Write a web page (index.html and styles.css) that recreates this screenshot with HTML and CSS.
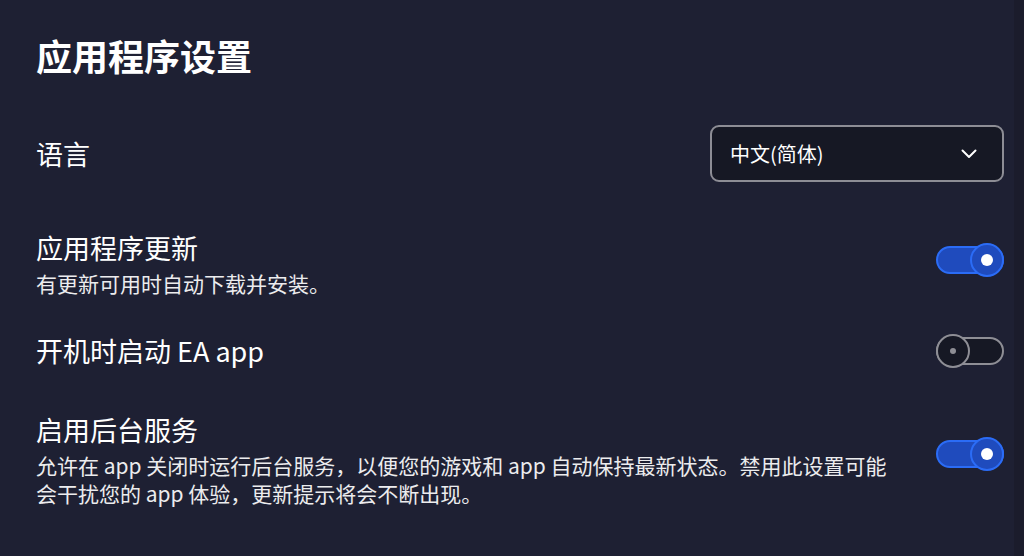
FILE: index.html
```html
<!DOCTYPE html>
<html lang="zh-CN">
<head>
    <meta charset="UTF-8">
    <meta name="viewport" content="width=device-width, initial-scale=1.0">
    <title>应用程序设置</title>
    <link rel="stylesheet" href="styles.css">
</head>
<body>
    <main class="settings">
        <h1 class="title">应用程序设置</h1>

        <div class="row row-lang">
            <div class="label">语言</div>
            <div class="select">
                <span>中文(简体)</span>
                <svg class="chevron" width="16" height="10" viewBox="0 0 16 10">
                    <path d="M1.5 1.5 L8 8 L14.5 1.5" fill="none" stroke="#fff" stroke-width="2" stroke-linecap="round" stroke-linejoin="round"/>
                </svg>
            </div>
        </div>

        <div class="row row-update">
            <div class="text">
                <div class="label">应用程序更新</div>
                <p class="desc">有更新可用时自动下载并安装。</p>
            </div>
            <div class="toggle on"><span class="knob"></span></div>
        </div>

        <div class="row row-startup">
            <div class="label">开机时启动 EA app</div>
            <div class="toggle"><span class="knob"></span></div>
        </div>

        <div class="row row-service">
            <div class="text">
                <div class="label">启用后台服务</div>
                <p class="desc">允许在 app 关闭时运行后台服务，以便您的游戏和 app 自动保持最新状态。禁用此设置可能会干扰您的 app 体验，更新提示将会不断出现。</p>
            </div>
            <div class="toggle on"><span class="knob"></span></div>
        </div>
    </main>
    <div class="scrollbar"></div>
</body>
</html>
```

FILE: styles.css
```css
html, body {
    margin: 0;
    height: 100%;
}
body {
    display: flex;
    background-color: #1e2033;
    color: #fff;
    font-family: 'Noto Sans CJK SC', 'Noto Sans', sans-serif;
    overflow: hidden;
}
.settings {
    flex: 1;
    padding: 33px 10px 0 36px;
}
.scrollbar {
    width: 10px;
    background-color: #1b1c2c;
}
.title {
    margin: 0;
    font-size: 36px;
    line-height: 44px;
    font-weight: 700;
}
.row {
    display: flex;
    align-items: center;
    justify-content: space-between;
}
.row-lang {
    margin-top: 48px;
}
.row-update {
    margin-top: 49px;
}
.row-startup {
    margin-top: 37px;
}
.row-service {
    margin-top: 45px;
}
.label {
    font-size: 27px;
    line-height: 34px;
}
.text {
    max-width: 860px;
}
.desc {
    margin: 4px 0 0;
    font-size: 21px;
    line-height: 28px;
    color: #ececee;
}
.row-service .desc {
    margin-top: 4px;
}
.select {
    display: flex;
    align-items: center;
    justify-content: space-between;
    width: 294px;
    height: 57px;
    padding: 0 25px 0 18px;
    box-sizing: border-box;
    border: 2px solid #8d8d95;
    border-radius: 9px;
    background-color: #161824;
    font-size: 20px;
}
.toggle {
    position: relative;
    width: 68px;
    height: 28px;
    border: 2px solid #8e8e95;
    border-radius: 16px;
    background-color: #161824;
    box-sizing: border-box;
    flex-shrink: 0;
}
.toggle .knob {
    position: absolute;
    top: -5px;
    left: -2px;
    width: 34px;
    height: 34px;
    border: 2px solid #8e8e95;
    border-radius: 50%;
    background-color: #161824;
    box-sizing: border-box;
}
.toggle .knob::after {
    content: '';
    position: absolute;
    left: 50%;
    top: 50%;
    width: 6px;
    height: 6px;
    margin: -3px 0 0 -3px;
    border-radius: 50%;
    background-color: #8e8e95;
}
.toggle.on {
    border-color: #2b6cf6;
    background-color: #1f4bbd;
}
.toggle.on .knob {
    left: auto;
    right: -2px;
    border-color: #2b6cf6;
    background-color: #1f4bbd;
}
.toggle.on .knob::after {
    width: 12px;
    height: 12px;
    margin: -6px 0 0 -6px;
    background-color: #fff;
}
.row-update .toggle {
    align-self: flex-start;
    margin-top: 15px;
}
.row-service .toggle {
    align-self: flex-start;
    margin-top: 27px;
}
```
